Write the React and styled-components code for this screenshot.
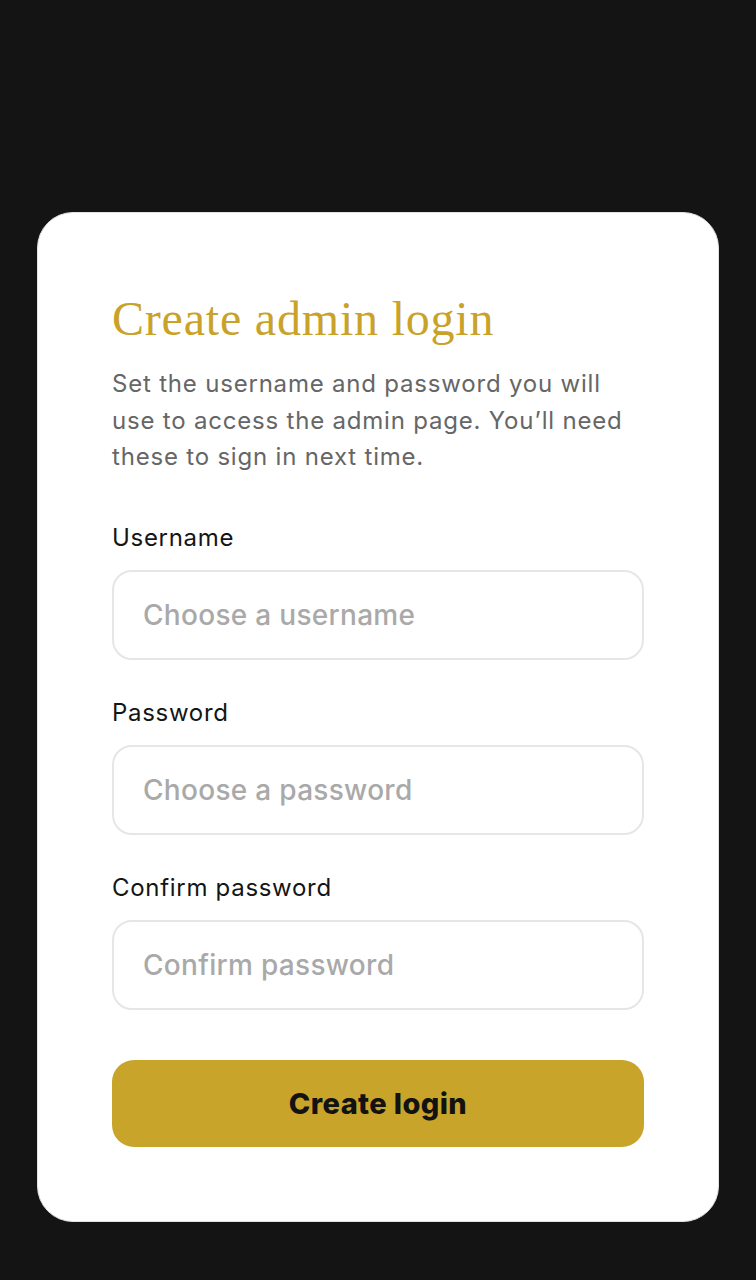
import React from "react";
import styled, { createGlobalStyle } from "styled-components";

const GlobalStyle = createGlobalStyle`
  html, body {
    margin: 0;
    padding: 0;
    background: #141414;
  }
  * {
    box-sizing: border-box;
  }
`;

const Page = styled.div`
  min-height: 1280px;
  padding: 212px 37px 60px 37px;
  background: #141414;
`;

const Card = styled.form`
  display: flex;
  flex-direction: column;
  background: #ffffff;
  border-radius: 36px;
  padding: 78px 74px 74px 74px;
  border: 1px solid #e2e2e2;
`;

const Title = styled.h1`
  margin: 0;
  font-family: "Liberation Serif", "DejaVu Serif", serif;
  font-weight: 400;
  font-size: 48px;
  line-height: 56px;
  color: #c9a22a;
  letter-spacing: 0.8px;
`;

const Intro = styled.p`
  margin: 19px 0 0 0;
  font-family: Inter, "Liberation Sans", sans-serif;
  font-size: 24px;
  line-height: 36.5px;
  letter-spacing: 0.8px;
  color: #666666;
`;

const Field = styled.label`
  display: flex;
  flex-direction: column;
  gap: 17px;
  margin-top: ${(p) => p.$top}px;
`;

const LabelText = styled.span`
  font-family: Inter, "Liberation Sans", sans-serif;
  font-size: 24px;
  line-height: 30px;
  letter-spacing: 0.7px;
  color: #151515;
`;

const Input = styled.input`
  height: 90px;
  width: 100%;
  border: 2px solid #e6e6e6;
  border-radius: 20px;
  padding: 0 29px;
  font-family: Inter, "Liberation Sans", sans-serif;
  font-size: 28px;
  font-weight: 500;
  letter-spacing: 0.3px;
  color: #222;
  outline: none;
  background: #fff;

  &::placeholder {
    color: #a9a9a9;
  }
`;

const Button = styled.button`
  margin-top: 50px;
  height: 87px;
  border: none;
  border-radius: 22px;
  background: #c9a42a;
  font-family: Inter, "Liberation Sans", sans-serif;
  font-size: 29px;
  font-weight: 800;
  letter-spacing: 0.4px;
  color: #121212;
  cursor: pointer;
`;

export default function App() {
  const onSubmit = (event) => {
    event.preventDefault();
  };

  return (
    <Page>
      <GlobalStyle />
      <Card onSubmit={onSubmit}>
        <Title>Create admin login</Title>
        <Intro>
          Set the username and password you will use to access the admin page.
          You’ll need these to sign in next time.
        </Intro>
        <Field $top={47}>
          <LabelText>Username</LabelText>
          <Input type="text" name="username" placeholder="Choose a username" />
        </Field>
        <Field $top={38}>
          <LabelText>Password</LabelText>
          <Input type="password" name="password" placeholder="Choose a password" />
        </Field>
        <Field $top={38}>
          <LabelText>Confirm password</LabelText>
          <Input type="password" name="confirm" placeholder="Confirm password" />
        </Field>
        <Button type="submit">Create login</Button>
      </Card>
    </Page>
  );
}
